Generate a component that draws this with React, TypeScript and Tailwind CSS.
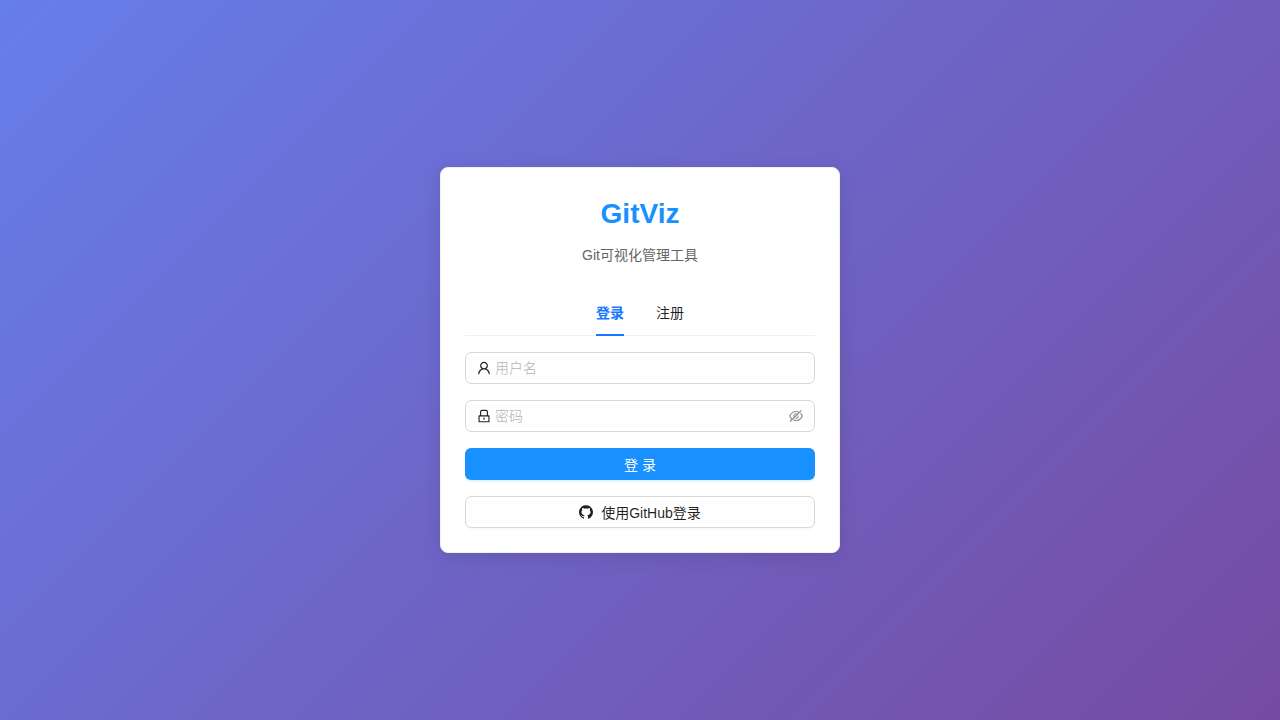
import { useState } from "react";
import { AiOutlineUser, AiOutlineLock, AiOutlineEyeInvisible, AiOutlineEye, AiFillGithub } from "react-icons/ai";

const fieldClass =
  "flex h-8 items-center rounded-md border border-[#d9d9d9] bg-white px-[11px] focus-within:border-[#1677ff]";
const inputClass =
  "min-w-0 flex-1 bg-transparent text-sm leading-[22px] text-black/88 outline-none placeholder:text-black/25";
const buttonClass = "flex h-8 cursor-pointer items-center justify-center gap-2 rounded-md";
const iconClass = "-mx-px size-4";

export default function App() {
  const [mode, setMode] = useState<"login" | "register">("login");
  const [visible, setVisible] = useState(false);
  const tabClass = (active: boolean) =>
    active
      ? "-mb-px cursor-pointer border-b-2 border-[#1677ff] pt-3 pb-[10px] font-bold text-[#1677ff]"
      : "-mb-px cursor-pointer border-b-2 border-transparent pt-3 pb-[10px] text-black/88";

  return (
    <main className="flex min-h-screen items-center justify-center bg-[linear-gradient(135deg,#667eea_0%,#764ba2_100%)] p-5 font-['Liberation_Sans','Noto_Sans_CJK_SC',sans-serif] text-sm leading-[22px] text-black/88">
      <section className="w-full max-w-[400px] rounded-lg border border-[#f0f0f0] bg-white p-6 shadow-[0_4px_20px_rgba(0,0,0,0.1)]">
        <header className="mb-6 text-center">
          <h1 className="mb-2 text-[28px] leading-[44px] font-bold text-[#1890ff]">GitViz</h1>
          <p className="text-[#666]">Git可视化管理工具</p>
        </header>
        <div role="tablist" className="mb-4 flex justify-center gap-8 border-b border-[#f0f0f0]">
          <button type="button" role="tab" aria-selected={mode === "login"} className={tabClass(mode === "login")} onClick={() => setMode("login")}>
            登录
          </button>
          <button type="button" role="tab" aria-selected={mode === "register"} className={tabClass(mode === "register")} onClick={() => setMode("register")}>
            注册
          </button>
        </div>
        <form className="flex flex-col gap-4" onSubmit={(e) => e.preventDefault()}>
          <div className={fieldClass}>
            <label htmlFor="username" className="mr-1">
              <AiOutlineUser className={iconClass} aria-label="用户名" />
            </label>
            <input id="username" type="text" placeholder="用户名" autoComplete="username" className={inputClass} />
          </div>
          <div className={fieldClass}>
            <label htmlFor="password" className="mr-1">
              <AiOutlineLock className={iconClass} aria-label="密码" />
            </label>
            <input id="password" type={visible ? "text" : "password"} placeholder="密码" autoComplete="current-password" className={inputClass} />
            <button type="button" aria-label="显示密码" className="cursor-pointer text-black/45" onClick={() => setVisible(!visible)}>
              {visible ? <AiOutlineEye className={iconClass} /> : <AiOutlineEyeInvisible className={iconClass} />}
            </button>
          </div>
          <button type="submit" className={`${buttonClass} bg-[#1890ff] text-white shadow-[0_2px_0_rgba(5,145,255,0.1)]`}>
            <span className="pt-0.5">{mode === "login" ? "登 录" : "注 册"}</span>
          </button>
          <button type="button" className={`${buttonClass} border border-[#d9d9d9] bg-white shadow-[0_2px_0_rgba(0,0,0,0.02)]`}>
            <AiFillGithub className={iconClass} aria-hidden="true" />
            <span className="pt-0.5">使用GitHub登录</span>
          </button>
        </form>
      </section>
    </main>
  );
}
